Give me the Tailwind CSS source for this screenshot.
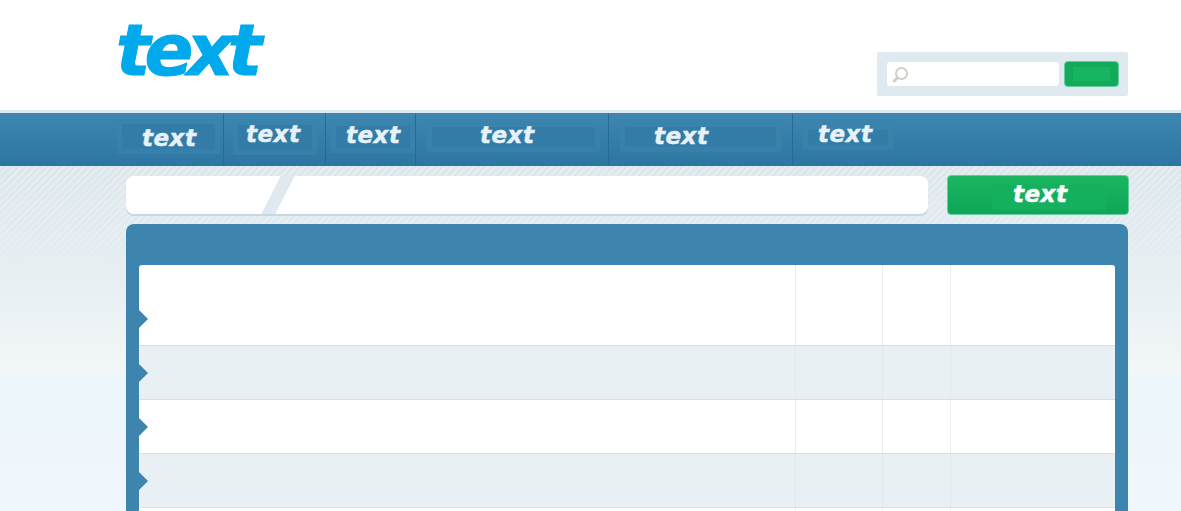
<!DOCTYPE html>
<html lang="en">
<head>
<meta charset="utf-8">
<title>text</title>
<script src="https://cdn.jsdelivr.net/npm/@tailwindcss/browser@4"></script>
</head>
<body class="h-[511px] overflow-hidden bg-white font-['Liberation_Sans',sans-serif]">
<header class="flex h-[110px] items-start justify-between pl-[116px] pr-[53px]">
  <a class="mt-[22px] block h-[56px] font-['DejaVu_Sans',sans-serif] text-[72px] leading-[56px] font-bold italic tracking-[-6px] text-[#00a8ec] [-webkit-text-stroke:1px_#00a8ec]">text</a>
  <form class="mt-[52px] flex h-[44px] w-[251px] items-center rounded-[2px] bg-[#dfe9f0] pl-[10px]">
    <div class="flex h-[24px] w-[172px] items-center rounded-[3px] bg-white pl-[5px]">
      <svg width="18" height="18" viewBox="0 0 18 18" fill="none" stroke="#cfcfc9" aria-hidden="true"><circle cx="9.5" cy="8.5" r="5.5" stroke-width="2"/><path d="M5.5 12.5 1.5 17" stroke-width="3"/></svg>
    </div>
    <button type="button" class="ml-[5px] flex h-[26px] w-[55px] items-center justify-center rounded-[4px] border border-[#68cb9e] bg-[#13ab5b]"><span class="h-[14px] w-[37px] bg-[#17b562]"></span></button>
  </form>
</header>
<div class="h-[3px] bg-[#dce9f1]"></div>
<nav class="flex h-[53px] bg-[linear-gradient(#3e86b0,#2c76a3)] pl-[112px] font-['DejaVu_Sans',sans-serif] text-[23px] leading-[17px] font-bold italic tracking-[0.5px] text-[#e6f2f8] [-webkit-text-stroke:0.5px_#e6f2f8]">
  <div class="w-[112px] border-r border-[#27699a] pl-[5px] pt-[6px]">
    <div class="h-[35px] w-[103px] bg-[#3a83ad]/70 p-[5px]"><div class="h-[25px] w-[93px] bg-[#337ca8] pl-[20px] pt-[6px]">text</div></div>
  </div>
  <div class="w-[102px] border-r border-[#27699a] pl-[9px] pt-[7px]">
    <div class="h-[35px] w-[84px] bg-[#3a83ad]/70 p-[5px]"><div class="h-[25px] w-[74px] bg-[#337ca8] pl-[8px] pt-[1px]">text</div></div>
  </div>
  <div class="w-[90px] border-r border-[#27699a] pl-[5px] pt-[8px]">
    <div class="h-[32px] w-[84px] bg-[#3a83ad]/70 p-[5px]"><div class="h-[22px] w-[74px] bg-[#337ca8] pl-[10px] pt-[1px]">text</div></div>
  </div>
  <div class="w-[193px] border-r border-[#27699a] pl-[11px] pt-[9px]">
    <div class="h-[30px] w-[173px] bg-[#3a83ad]/70 p-[5px]"><div class="h-[20px] w-[163px] bg-[#337ca8] pl-[48px]">text</div></div>
  </div>
  <div class="w-[184px] border-r border-[#27699a] pl-[11px] pt-[9px]">
    <div class="h-[30px] w-[161px] bg-[#3a83ad]/70 p-[5px]"><div class="h-[20px] w-[151px] bg-[#337ca8] pl-[29px] pt-[1px]">text</div></div>
  </div>
  <div class="pl-[10px] pt-[12px]">
    <div class="h-[25px] w-[90px] bg-[#3a83ad]/70 p-[5px]"><div class="h-[15px] w-[80px] bg-[#337ca8] pl-[10px]"><span class="relative -top-[4px] block">text</span></div></div>
  </div>
</nav>
<main class="relative h-[345px] bg-[linear-gradient(#dce7ed_0,#e4edf1_90px,#eef4f6_170px,#f1f6f8_205px,#edf6fb_212px,#eff6fd_345px)] pl-[126px] pr-[52px] pt-[10px]">
  <div class="pointer-events-none absolute inset-x-0 top-0 h-[130px] bg-[repeating-linear-gradient(135deg,#ffffff40_0,#ffffff40_2px,transparent_2px,transparent_5px)] [mask-image:linear-gradient(#000_40%,transparent)]"></div>
  <div class="relative flex h-[38px] items-start">
    <div class="relative h-[38px] w-[802px] shrink-0 overflow-hidden rounded-[8px] bg-white shadow-[0_2px_0_#c5d9e2]">
      <div class="absolute left-[145px] top-0 h-[38px] w-[14px] -skew-x-[27deg] bg-[#dfe9ef]"></div>
    </div>
    <button type="button" class="-mt-[1px] ml-[19px] h-[40px] w-[182px] shrink-0 rounded-[4px] border border-[#68cb9e] bg-[linear-gradient(#1bb660,#0ea658)] pl-[44px] pt-[4px] text-left">
      <span class="block h-[25px] w-[114px] bg-[#14b05e] pl-[21px] pt-[1px] font-['DejaVu_Sans',sans-serif] text-[23px] leading-[17px] font-bold italic tracking-[0.5px] text-white [-webkit-text-stroke:0.5px_#ffffff]">text</span>
    </button>
  </div>
  <section class="relative mt-[10px] h-[400px] w-[1002px] rounded-t-[8px] bg-[#3d85ae] px-[13px] pt-[41px]">
    <div class="overflow-hidden rounded-t-[3px]">
      <div class="relative grid h-[81px] grid-cols-[657px_87px_68px_1fr] border-b border-[#dcdfe0] bg-white">
        <div class="border-r border-[#ebeded]"></div><div class="border-r border-[#ebeded]"></div><div class="border-r border-[#ebeded]"></div><div></div>
        <span class="absolute bottom-[17px] left-0 h-[18px] w-[9px] bg-[#3d85ae] [clip-path:polygon(0_0,100%_50%,0_100%)]"></span>
      </div>
      <div class="relative grid h-[54px] grid-cols-[657px_87px_68px_1fr] border-b border-[#dcdfe0] bg-[#e9f0f3]">
        <div class="border-r border-[#e2e8eb]"></div><div class="border-r border-[#e2e8eb]"></div><div class="border-r border-[#e2e8eb]"></div><div></div>
        <span class="absolute bottom-[17px] left-0 h-[18px] w-[9px] bg-[#3d85ae] [clip-path:polygon(0_0,100%_50%,0_100%)]"></span>
      </div>
      <div class="relative grid h-[54px] grid-cols-[657px_87px_68px_1fr] border-b border-[#dcdfe0] bg-white">
        <div class="border-r border-[#ebeded]"></div><div class="border-r border-[#ebeded]"></div><div class="border-r border-[#ebeded]"></div><div></div>
        <span class="absolute bottom-[17px] left-0 h-[18px] w-[9px] bg-[#3d85ae] [clip-path:polygon(0_0,100%_50%,0_100%)]"></span>
      </div>
      <div class="relative grid h-[54px] grid-cols-[657px_87px_68px_1fr] border-b border-[#dcdfe0] bg-[#e9f0f3]">
        <div class="border-r border-[#e2e8eb]"></div><div class="border-r border-[#e2e8eb]"></div><div class="border-r border-[#e2e8eb]"></div><div></div>
        <span class="absolute bottom-[17px] left-0 h-[18px] w-[9px] bg-[#3d85ae] [clip-path:polygon(0_0,100%_50%,0_100%)]"></span>
      </div>
      <div class="grid h-[54px] grid-cols-[657px_87px_68px_1fr] bg-white">
        <div class="border-r border-[#ebeded]"></div><div class="border-r border-[#ebeded]"></div><div class="border-r border-[#ebeded]"></div><div></div>
      </div>
    </div>
  </section>
</main>
</body>
</html>
